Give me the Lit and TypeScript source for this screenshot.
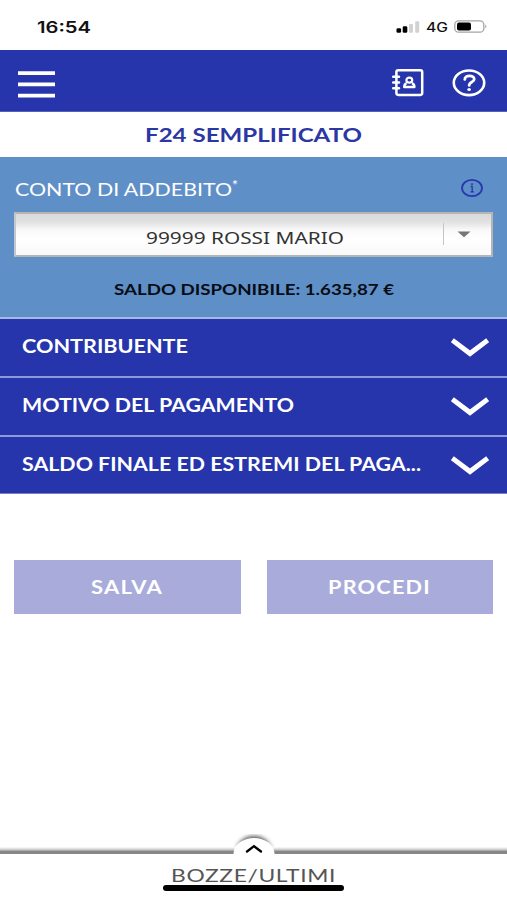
import { LitElement, html, css } from "lit";
import { customElement, property } from "lit/decorators.js";

/** A single line of text fitted to a given width, with its capitals centred vertically. */
@customElement("fit-label")
class FitLabel extends LitElement {
  @property() text = "";
  @property({ type: Number }) width = 100;
  @property({ type: Number }) size = 16;

  static styles = css`
    :host { display: block; flex: none; }
    svg { display: block; overflow: visible; fill: currentColor; }
  `;

  render() {
    return html`<svg width=${this.width} height=${this.size}>
      <text x="0" y=${this.size * 0.86} font-size=${this.size}
        textLength=${this.width} lengthAdjust="spacingAndGlyphs">${this.text}</text>
    </svg>`;
  }
}

@customElement("app-root")
class AppRoot extends LitElement {
  static styles = css`
    :host {
      display: flex; flex-direction: column; height: 900px; width: 507px;
      overflow: hidden; background: #fff; box-sizing: border-box;
      font-family: Lato, "Liberation Sans", sans-serif; font-weight: 400;
    }
    * { box-sizing: border-box; }
    svg { display: block; flex: none; }
    .status { height: 50px; flex: none; display: flex; align-items: center; padding: 3px 19px 0 37px; color: #111; font-family: Inter, sans-serif; font-weight: 600; }
    .status .right { margin-left: auto; display: flex; align-items: center; gap: 6px; font-weight: 500; }
    .status .net { padding-top: 1px; }
    .bar { height: 62px; flex: none; background: #2635ab; border-bottom: 1px solid #5560bb; display: flex; align-items: center; padding: 5px 21px 0 18px; }
    .menu { margin-top: 4px; }
    .bar .tools { margin-left: auto; display: flex; align-items: center; gap: 28px; }
    .title { height: 45px; flex: none; display: flex; align-items: center; justify-content: center; color: #2b37a3; font-weight: 700; }
    .account { height: 161px; flex: none; background: #5f8fc7; padding: 20px 14px 0; color: #fff; }
    .heading { display: flex; align-items: center; height: 24px; padding: 0 9px 0 1px; }
    .caption { padding-top: 2px; }
    .star { align-self: flex-start; margin: 2px 0 0 0; }
    .info { margin-left: auto; margin-top: -3px; }
    .select {
      height: 45px; margin-top: 11px; border: 2px solid #b5b5b5; border-left-color: #c4c8ce;
      background: linear-gradient(#d9d9d9 0, #e2e2e2 20%, #f8f8f8 38%, #fff 60%, #f8f8f8 100%);
      display: flex; align-items: center; color: #333; font-family: "Noto Sans", sans-serif;
    }
    .value { width: 427px; display: flex; justify-content: center; padding: 7px 0 0 31px; }
    .split { width: 1px; height: 22px; background: #c5c5c5; margin-top: -2px; }
    .arrow { margin: 0 0 1px 13px; }
    .balance { display: flex; justify-content: center; margin-top: 24px; color: #080c14; font-weight: 700; }
    .row { height: 59px; flex: none; background: #2635ab; border-top: 2px solid #8f99d8; display: flex; align-items: center; justify-content: space-between; padding: 0 18px 1px 22px; color: #fff; font-weight: 700; }
    .row.first { border-top-color: #a5b9e2; margin-top: -1px; }
    .row.last { border-bottom: 1px solid #7780cb; padding-bottom: 0; }
    .row svg { margin-top: 1px; }
    .actions { display: flex; gap: 26px; padding: 66px 14px 0; }
    .button { flex: 1; height: 54px; background: #a9acdb; color: #fff; font-weight: 700; letter-spacing: 1px; display: flex; align-items: center; justify-content: center; padding-top: 1px; }
    .drawer { margin-top: auto; flex: none; height: 66px; display: flex; flex-direction: column; align-items: center; }
    .edge { width: 507px; height: 66px; margin-bottom: -66px; }
    .drawer-name { color: #555; margin-top: 33px; letter-spacing: 0.5px; }
    .home { width: 181px; height: 6px; border-radius: 3px; background: #000; }
  `;

  private chevron() {
    return html`<svg width="38" height="20" viewBox="0 0 38 20">
      <path d="M1.3 2.2 L19 15.6 L36.7 2.2" fill="none" stroke="#fff" stroke-width="5" />
    </svg>`;
  }

  private row(text: string, width: number, cls: string) {
    return html`<div class="row ${cls}">
      <fit-label .text=${text} .width=${width} .size=${18}></fit-label>${this.chevron()}
    </div>`;
  }

  render() {
    return html`
      <div class="status">
        <fit-label .text=${"16:54"} .width=${54} .size=${16}></fit-label>
        <div class="right">
          <svg width="24" height="12" viewBox="0 0 24 12">
            <rect x="0.5" y="7.3" width="4.6" height="4.4" rx="1.3" fill="#000" />
            <rect x="6.7" y="5.3" width="4.6" height="6.4" rx="1.3" fill="#000" />
            <rect x="13" y="3" width="4" height="8.7" rx="1" fill="#d2d2d2" />
            <rect x="19.2" y="0.3" width="4" height="11.4" rx="1" fill="#d2d2d2" />
          </svg>
          <fit-label class="net" .text=${"4G"} .width=${22} .size=${12.5}></fit-label>
          <svg width="34" height="13" viewBox="0 0 34 13">
            <rect x="0.8" y="0.8" width="29" height="11.4" rx="3.8" fill="#fff" stroke="#a5a5a5" stroke-width="1.3" />
            <rect x="3" y="2.4" width="14" height="8.2" rx="2" fill="#000" />
            <path d="M31.3 4.6 Q33.5 6.5 31.3 8.4Z" fill="#999" />
          </svg>
        </div>
      </div>

      <div class="bar">
        <svg class="menu" width="37" height="28" viewBox="0 0 37 28">
          <path d="M0 2.2H37M0 13.4H37M0 24.6H37" stroke="#fff" stroke-width="3.8" />
        </svg>
        <div class="tools">
          <svg width="32" height="28" viewBox="0 0 32 28">
            <g fill="none" stroke="#fff">
              <rect x="4.4" y="1.3" width="25.8" height="24.6" rx="1.8" stroke-width="2.5" />
              <path d="M1.2 7.7H7M1.2 13.5H7M1.2 19.3H7" stroke-width="2.5" stroke-linecap="round" />
              <ellipse cx="17.3" cy="11.2" rx="2.9" ry="2.5" stroke-width="2.2" />
              <path d="M14.6 14.4Q12.2 15 12.2 18H22.4Q22.4 15 20 14.4" stroke-width="2.4" stroke-linejoin="round" />
            </g>
          </svg>
          <svg width="34" height="28" viewBox="0 0 34 28">
            <ellipse cx="17" cy="13.8" rx="15.2" ry="12.3" fill="none" stroke="#fff" stroke-width="2.6" />
            <path d="M12.8 10.4C12.8 5.6 22.2 5.7 22.2 10.2C22.2 13.2 17.2 12.8 17.2 16.4" fill="none" stroke="#fff" stroke-width="2.8" stroke-linecap="round" />
            <ellipse cx="17.1" cy="20.5" rx="1.8" ry="1.5" fill="#fff" />
          </svg>
        </div>
      </div>

      <div class="title"><fit-label .text=${"F24 SEMPLIFICATO"} .width=${217} .size=${19.5}></fit-label></div>

      <div class="account">
        <div class="heading">
          <fit-label class="caption" .text=${"CONTO DI ADDEBITO"} .width=${217} .size=${18}></fit-label>
          <fit-label class="star" .text=${"*"} .width=${6} .size=${13}></fit-label>
          <svg class="info" width="23" height="20" viewBox="0 0 23 20">
            <g stroke="#2737b0" fill="none">
              <ellipse cx="11" cy="10" rx="10" ry="8.2" stroke-width="1.8" />
              <path d="M9.6 8.5H11.2V13.8M9.4 13.8H13" stroke-width="1.3" />
            </g>
            <ellipse cx="11" cy="6.1" rx="1.1" ry="0.9" fill="#2737b0" />
          </svg>
        </div>
        <div class="select">
          <div class="value"><fit-label .text=${"99999 ROSSI MARIO"} .width=${198} .size=${16}></fit-label></div>
          <div class="split"></div>
          <svg class="arrow" width="14" height="7" viewBox="0 0 14 7"><path d="M0.5 0.5H13.5L7 6.2Z" fill="#777" /></svg>
        </div>
        <div class="balance"><fit-label .text=${"SALDO DISPONIBILE: 1.635,87 €"} .width=${280} .size=${16}></fit-label></div>
      </div>

      ${this.row("CONTRIBUENTE", 166, "first")}
      ${this.row("MOTIVO DEL PAGAMENTO", 272, "")}
      ${this.row("SALDO FINALE ED ESTREMI DEL PAGA...", 399, "last")}

      <div class="actions">
        <div class="button"><fit-label .text=${"SALVA"} .width=${72} .size=${18}></fit-label></div>
        <div class="button"><fit-label .text=${"PROCEDI"} .width=${103} .size=${18}></fit-label></div>
      </div>

      <div class="drawer">
        <svg class="edge" viewBox="0 0 507 66">
          <defs>
            <linearGradient id="shade" x1="0" y1="0" x2="0" y2="1">
              <stop offset="0" stop-color="#fff" /><stop offset="0.35" stop-color="#d0d0d0" />
              <stop offset="0.65" stop-color="#858585" /><stop offset="1" stop-color="#888" />
            </linearGradient>
            <filter id="soft" x="-30%" y="-30%" width="160%" height="160%"><feGaussianBlur stdDeviation="2" /></filter>
          </defs>
          <ellipse cx="254" cy="16.5" rx="17" ry="14.5" fill="#555" filter="url(#soft)" />
          <rect x="0" y="13" width="507" height="7" fill="url(#shade)" />
          <rect x="0" y="20" width="507" height="46" fill="#fff" />
          <ellipse cx="254" cy="19.5" rx="20.5" ry="15.5" fill="#fff" />
          <path d="M247 17.5L254 12.2L261 17.5" fill="none" stroke="#000" stroke-width="2.3" stroke-linecap="round" />
        </svg>
        <fit-label class="drawer-name" .text=${"BOZZE/ULTIMI"} .width=${165} .size=${18}></fit-label>
        <div class="home"></div>
      </div>
    `;
  }
}
